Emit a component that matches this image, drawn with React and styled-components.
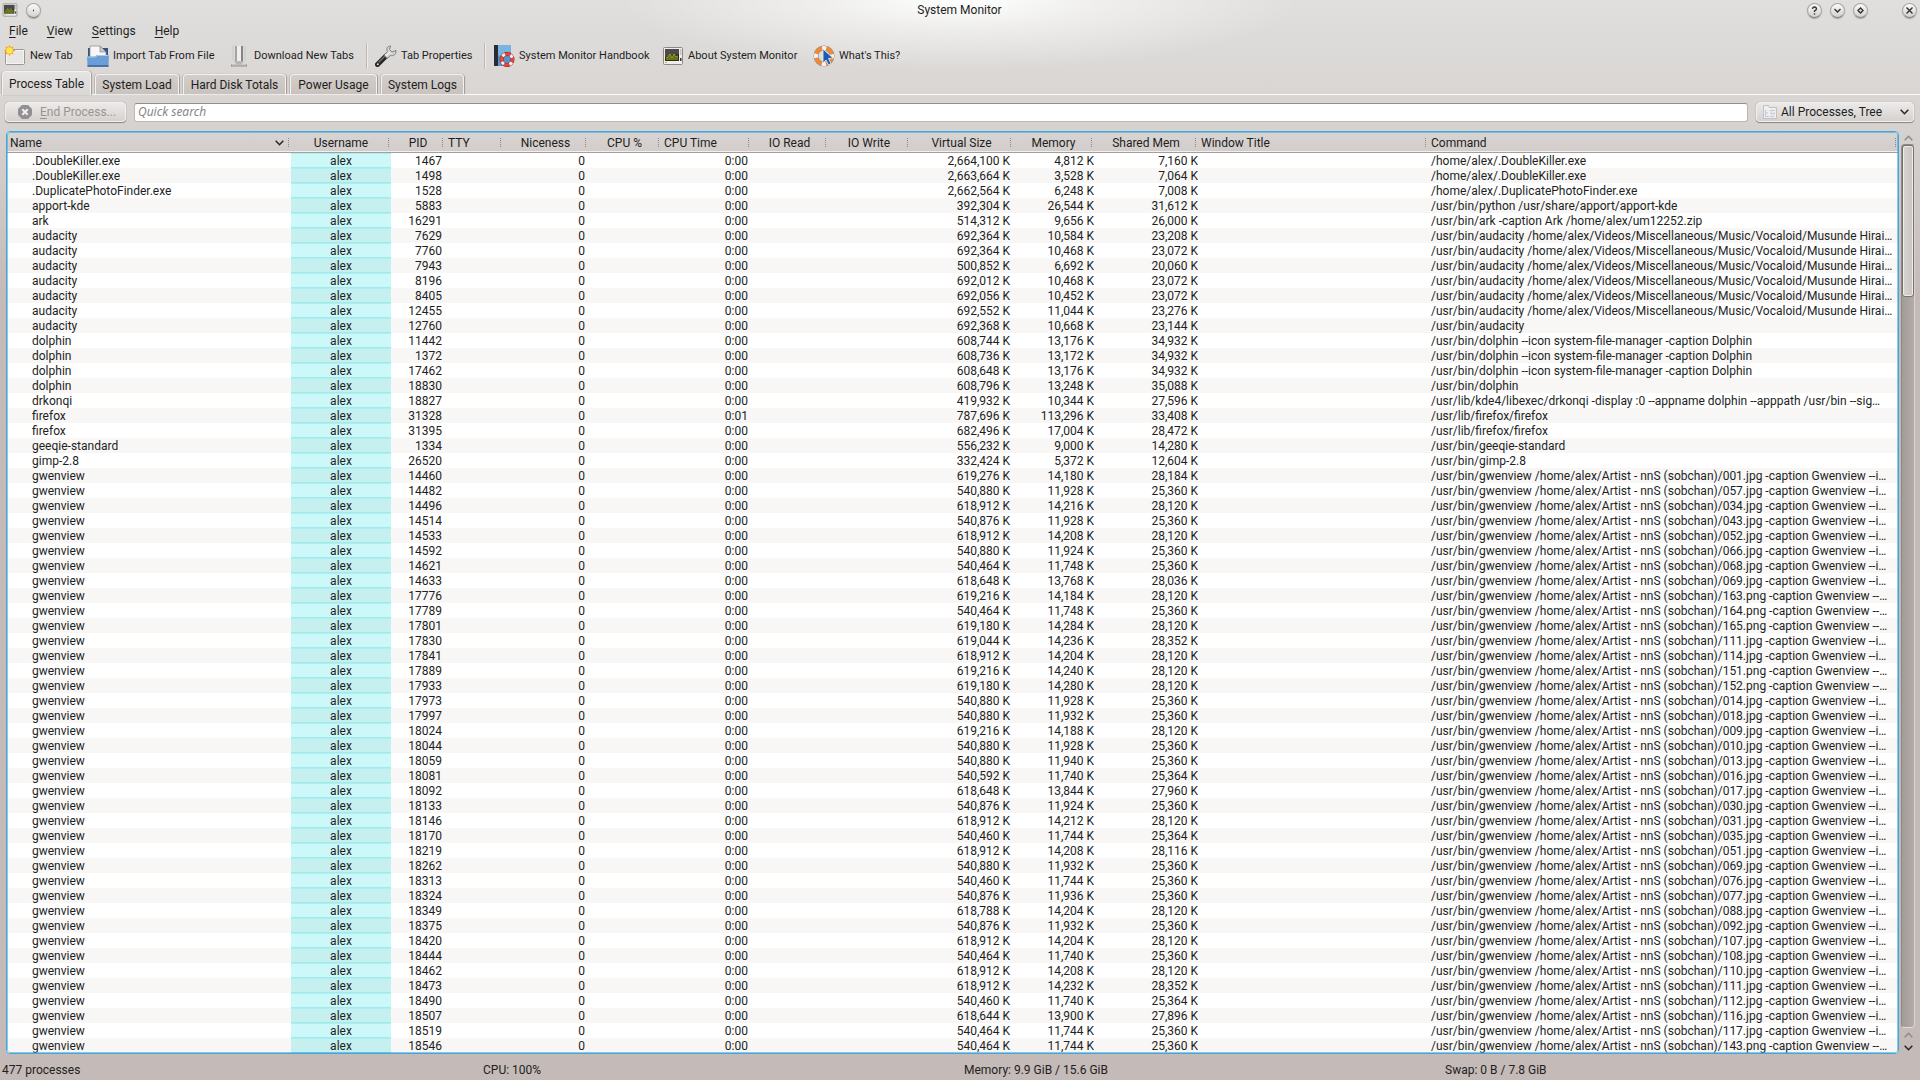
import styled, { createGlobalStyle, css } from 'styled-components';

const GlobalStyle = createGlobalStyle`
  * {
    box-sizing: border-box;
  }

  body {
    margin: 0;
    color: #221e1d;
    font: 12px/15px Roboto, 'Noto Sans', sans-serif;
  }

  button,
  input,
  select {
    color: inherit;
    font: inherit;
  }
`;

const Window = styled.div`
  display: flex;
  flex-direction: column;
  min-height: 100vh;
  background:
    radial-gradient(ellipse 340px 70px at 50% 0, #ffffff 0%, rgba(255, 255, 255, 0.5) 40%, rgba(255, 255, 255, 0) 100%) no-repeat,
    linear-gradient(#e0dfdd 0, #d6d2d0 130px, #c4bab7 300px);
`;

const TitleBar = styled.header`
  display: grid;
  grid-template-columns: 1fr auto 1fr;
  align-items: center;
  height: 20px;
  padding: 0 3px 0 2px;
`;

const TitleGroup = styled.div`
  display: flex;
  align-items: center;
  justify-content: ${({ $end }) => ($end ? 'flex-end' : 'flex-start')};
  gap: 8px;
`;

const Title = styled.h1`
  margin: 0;
  font-size: 12px;
  font-weight: 400;
`;

const WindowButton = styled.button`
  display: grid;
  place-items: center;
  width: 15px;
  height: 15px;
  margin-left: ${({ $apart }) => ($apart ? '26px' : '0')};
  padding: 0;
  border: 1px solid #aaa5a2;
  border-bottom-color: #85807d;
  border-radius: 50%;
  background: linear-gradient(#fbfbfa, #d4d0ce);
  box-shadow: 0 1px 1px rgba(0, 0, 0, 0.25);
`;

const MenuBar = styled.nav`
  display: flex;
  height: 21px;
`;

const MenuItem = styled.button`
  padding: 2px 10px 0 9px;
  border: 0;
  background: none;
`;

const Mnemonic = styled.span`
  text-decoration: underline;
  text-underline-offset: 2px;
`;

const Toolbar = styled.div`
  display: flex;
  align-items: center;
  height: 29px;
  padding-left: 4px;
`;

const ToolButton = styled.button`
  display: flex;
  align-items: center;
  gap: 4px;
  width: ${({ $width }) => $width}px;
  height: 26px;
  padding: 0;
  border: 0;
  background: none;
  font-size: 11px;
  white-space: nowrap;

  svg {
    flex: none;
  }
`;

const ToolSeparator = styled.span`
  width: 2px;
  height: 26px;
  margin-right: 7px;
  border-left: 1px solid #bdb7b4;
  border-right: 1px solid #efedec;
`;

const Tabs = styled.div`
  display: flex;
  align-items: flex-end;
  gap: 4px;
  height: 25px;
  padding-left: 2px;
  border-bottom: 1px solid #fbfafa;
`;

const Tab = styled.button`
  width: ${({ $width }) => $width}px;
  height: 20px;
  padding: 2px 0 0;
  border: 1px solid #f4f2f1;
  border-bottom: 0;
  border-radius: 4px 4px 0 0;
  background: linear-gradient(#d3cecb, #c9c2bf);
  box-shadow: 1px 0 1px #9f9895, -1px 0 1px #bbb5b2;
  white-space: nowrap;

  ${({ $active }) =>
    $active &&
    css`
      height: 24px;
      margin-bottom: -1px;
      background: linear-gradient(#e6e4e3, #dad6d4);
    `}
`;

const FilterBar = styled.div`
  display: flex;
  align-items: center;
  gap: 8px;
  height: 36px;
  padding: 0 6px 2px 5px;
`;

const raised = css`
  border: 1px solid #f3f1f0;
  border-radius: 4px;
  background: linear-gradient(#eceae9, #d5d1cf);
  box-shadow: 0 1px 1px #8b8582, 0 0 1px #8b8582;
`;

const EndButton = styled.button`
  ${raised}
  display: flex;
  align-items: center;
  gap: 7px;
  width: 121px;
  height: 20px;
  padding: 0 11px;
  color: #9a9491;
  white-space: nowrap;

  svg {
    flex: none;
  }
`;

const SearchBox = styled.input`
  flex: 1;
  height: 19px;
  padding: 0 3px;
  border: 1px solid #bdb7b4;
  border-top-color: #958f8c;
  border-radius: 3px;
  background: #ffffff;
  outline: none;

  &::placeholder {
    color: #8b8684;
    font-family: 'Noto Sans', sans-serif;
    font-style: italic;
    opacity: 1;
  }
`;

const FilterSelect = styled.label`
  ${raised}
  display: flex;
  align-items: center;
  gap: 3px;
  width: 158px;
  height: 20px;
  padding: 0 4px 0 5px;

  select {
    flex: 1;
    min-width: 0;
    padding: 0;
    border: 0;
    background: none;
    appearance: none;
    outline: none;
  }
`;

const TablePane = styled.main`
  display: flex;
  gap: 2px;
  padding: 0 5px 0 6px;
`;

const TableFrame = styled.div`
  position: relative;
  flex: 1;
  min-width: 0;
  overflow: hidden;
  border: 1px solid #43a7dc;
  border-radius: 4px;
  background: #ffffff;

  /* focus glow, drawn over the cells */
  &::after {
    position: absolute;
    inset: 0;
    border-radius: 3px;
    box-shadow: inset 0 0 0 1px rgba(67, 167, 220, 0.6);
    content: '';
    pointer-events: none;
  }
`;

const ProcessTable = styled.table`
  width: 100%;
  table-layout: fixed;
  border-spacing: 0;
`;

const HeadCell = styled.th`
  height: 21px;
  padding: 2px 3px 0;
  border-bottom: 1px solid #a59e9b;
  background:
    repeating-linear-gradient(#8f8986 0 1px, transparent 1px 2px) right 2px center / 1px 9px no-repeat,
    linear-gradient(#d9d5d3, #d2ccca);
  box-shadow: inset 0 -1px 0 #f2f0ef;
  font-weight: 400;
  text-align: ${({ $align }) => $align};
  white-space: nowrap;
`;

const SortHeading = styled.span`
  display: flex;
  align-items: center;
  justify-content: space-between;
  padding-right: 4px;
`;

const Row = styled.tr`
  background: ${({ $odd }) => ($odd ? '#f8f7f6' : '#ffffff')};
`;

const Cell = styled.td`
  height: 15px;
  padding: 2px ${({ $flush }) => ($flush ? 0 : 3)}px 0 3px;
  overflow: hidden;
  line-height: 13px;
  text-align: ${({ $align }) => $align || 'right'};
  white-space: nowrap;
`;

const NameCell = styled(Cell)`
  padding-left: 25px;
`;

const UserCell = styled(Cell)`
  background: ${({ $odd }) => ($odd ? '#c5f0ef' : '#cdf8fa')};
  box-shadow: inset 0 1px 0 #aaf0f0, inset 0 -1px 0 #a0ecec;
`;

const ScrollBar = styled.div`
  display: flex;
  flex-direction: column;
  align-items: center;
  width: 14px;
`;

const ScrollButton = styled.button`
  display: grid;
  place-items: center;
  width: 14px;
  height: 13px;
  padding: 0;
  border: 0;
  background: none;
`;

const ScrollGroove = styled.div`
  flex: 1;
  width: 14px;
  border: 1px solid #8f8885;
  border-right-color: #d8d2d0;
  border-bottom-color: #e2dedc;
  border-radius: 4px;
  background: linear-gradient(90deg, #a39b98, #b3aba8);
`;

const ScrollThumb = styled.div`
  width: 12px;
  height: 152px;
  border: 1px solid #77706d;
  border-radius: 3px;
  background: linear-gradient(90deg, #d8d4d2, #cac4c1);
  box-shadow: inset 0 0 0 1px #efedec;
`;

const StatusBar = styled.footer`
  display: grid;
  grid-template-columns: repeat(4, 1fr);
  gap: 6px;
  padding: 9px 0 2px 2px;
`;

const MonitorIcon = ({ size }) => (
  <svg width={size} height={size} viewBox="0 0 22 22">
    <rect x="1.5" y="2.5" width="19" height="17" rx="1" fill="#efeeed" stroke="#8d8987" />
    <rect x="3" y="4" width="14" height="12" fill="#2b2c28" />
    <path d="M3 4h14v5L3 12z" fill="#4b4c48" />
    <path d="M4 13l2-1 2-3 2 4 2-4 2 3 2-1v4H4z" fill="#6d7112" />
    <path d="M4 13l2-1 2-3 2 4 2-4 2 3 2-1" fill="none" stroke="#b0b331" strokeWidth=".7" />
    <path d="M18 5h1.500M18 7h1.500M18 9h1.500" stroke="#9c9997" />
    <rect x="18" y="13" width="1.500" height="3" fill="#333" />
    <rect x="3" y="17" width="2" height="1" fill="#b4c400" />
  </svg>
);

const NewTabIcon = () => (
  <svg width="22" height="22" viewBox="0 0 22 22">
    <rect x="1.500" y="4.500" width="19" height="15" rx="1" fill="#f5f4f3" stroke="#9c9896" />
    <rect x="3" y="6" width="16" height="12" fill="#e7e6e5" />
    <path d="M5.500 0l1.300 2.300 2.600-.9-.6 2.700 2.600 1.400-2.600 1.400.6 2.700-2.600-.9-1.300 2.300-1.300-2.300-2.600.9.600-2.700L-.2 5.500l2.400-1.400-.6-2.700 2.600.9z" fill="#f3a51c" />
    <circle cx="5.500" cy="5.500" r="3.200" fill="#ffe84d" />
  </svg>
);

const ImportIcon = () => (
  <svg width="22" height="22" viewBox="0 0 22 22">
    <path d="M1 3h5v8H1zM15 3h6v10H1V7z" fill="#2f5580" />
    <path d="M3 1h10l6 6v7H3z" fill="#f7f7f7" stroke="#8f9399" strokeWidth=".8" />
    <path d="M13 1v6h6z" fill="#c9ccd0" stroke="#777" strokeWidth=".6" />
    <path d="M0 11.500h8l2-1.500h12l-.5 11.500H.5z" fill="#6b9ed6" />
    <path d="M.5 12h8l2-1.500h11" fill="none" stroke="#a8cbee" />
    <path d="M.5 21h21" stroke="#355f94" strokeWidth="1.500" />
  </svg>
);

const DownloadIcon = () => (
  <svg width="22" height="22" viewBox="0 0 22 22">
    <path d="M7 1h2v15H7z" fill="#a4a3a2" />
    <path d="M9 1h4v15H9z" fill="#eeeeed" />
    <path d="M13 1h2v15h-2z" fill="#858482" />
    <path d="M5 1v14M17 1v14" stroke="#c6c4c2" strokeWidth=".8" />
    <path d="M6 16h10l-3 4H9z" fill="#b8b6b5" />
    <path d="M3 20.500h16" stroke="#8e8b89" strokeWidth="2" />
    <path d="M4 20h14" stroke="#e7e6e5" strokeWidth=".8" />
  </svg>
);

const WrenchIcon = () => (
  <svg width="22" height="22" viewBox="0 0 22 22">
    <path d="M2.500 19.500L11 11" stroke="#252525" strokeWidth="5" strokeLinecap="round" />
    <path d="M3.500 17.500L10 11" stroke="#777" strokeWidth="1.200" />
    <circle cx="2.800" cy="19.200" r="1" fill="#ddd" />
    <path d="M9 10l3.500-3.500C11 3.500 12.500 1 15.500 1l-1 3.500L17 7l4-1.500c.5 3.500-2.500 6-5.500 5L12 13.500z" fill="#d4d5d6" stroke="#747474" strokeWidth=".9" />
    <path d="M11 11l4-4" stroke="#fff" />
  </svg>
);

const HandbookIcon = () => (
  <svg width="22" height="22" viewBox="0 0 22 22">
    <rect x="1" y="0" width="17" height="21" fill="#5296cf" />
    <path d="M5 0h13v7L5 11z" fill="#79b3e0" />
    <rect x="1" y="0" width="4" height="21" fill="#262c35" />
    <circle cx="14" cy="14.500" r="5.500" fill="none" stroke="#8d2020" strokeWidth="4" />
    <circle cx="14" cy="14.500" r="5.500" fill="none" stroke="#e7483d" strokeWidth="3" />
    <circle cx="14" cy="14.500" r="5.500" fill="none" stroke="#f4f4f4" strokeWidth="3" strokeDasharray="2.800 5.840" strokeDashoffset="-3" />
  </svg>
);

const WhatsThisIcon = () => (
  <svg width="22" height="22" viewBox="0 0 22 22">
    <circle cx="11" cy="11" r="8" fill="none" stroke="#a08c7c" strokeWidth="5" />
    <circle cx="11" cy="11" r="8" fill="none" stroke="#ec8a3c" strokeWidth="4" />
    <circle cx="11" cy="11" r="8" fill="none" stroke="#f5f3f1" strokeWidth="4" strokeDasharray="4 8.570" strokeDashoffset="2" />
    <path d="M10 4l10 9-4.500.5 2.500 5-2.500 1.500-2.500-5L10 18z" fill="#1b5cb0" stroke="#d8e6f6" strokeWidth=".9" />
  </svg>
);

const StopIcon = () => (
  <svg width="16" height="16" viewBox="0 0 16 16">
    <path d="M5 1h6l4 4v6l-4 4H5l-4-4V5z" fill="#929090" />
    <path d="M5.300 5.300l5.400 5.400m0-5.400l-5.400 5.400" stroke="#f0efee" strokeWidth="2.200" />
  </svg>
);

const FolderIcon = () => (
  <svg width="16" height="16" viewBox="0 0 16 16" aria-hidden="true">
    <path d="M1.500 1.500h5l1 2h7v11h-13z" fill="#efeeee" stroke="#c3c0be" />
    <path d="M3.500 6v6.500H7M3.500 9H6M8 6.500h5M8 9.500h5M8 12.500h4" fill="none" stroke="#b9cadb" />
    <path d="M9.500 6v5M12 8v4" stroke="#cfd6df" />
  </svg>
);

const Chevron = ({ up, color = '#2c2827' }) => (
  <svg width="9" height="6" viewBox="0 0 9 6" aria-hidden="true">
    <path d={up ? 'M.7 5.200L4.500 1.300 8.300 5.200' : 'M.7.800L4.500 4.700 8.300.800'} fill="none" stroke={color} strokeWidth="1.600" />
  </svg>
);

const Glyph = ({ d }) => (
  <svg width="9" height="9" viewBox="0 0 9 9">
    <path d={d} fill="none" stroke="#33302e" strokeWidth="1.400" />
  </svg>
);

const WINDOW_BUTTONS = [
  { label: 'Context help', d: 'M2.500 2.800Q2.800 1 4.500 1T6.500 2.700Q6.500 3.800 4.500 5V6M4.500 7.200V8.500' },
  { label: 'Minimize', d: 'M1.500 3L4.500 6 7.500 3' },
  { label: 'Maximize', d: 'M4.500 2L7 4.500 4.500 7 2 4.500z' },
  { label: 'Close', d: 'M1.500 1.500l6 6m0-6l-6 6', apart: true },
];

const TABS = [
  { label: 'Process Table', width: 89, active: true },
  { label: 'System Load', width: 84 },
  { label: 'Hard Disk Totals', width: 103 },
  { label: 'Power Usage', width: 87 },
  { label: 'System Logs', width: 83 },
];

const COLUMNS = [
  { label: 'Name', width: 284, align: 'left', sorted: true },
  { label: 'Username', width: 100, align: 'center' },
  { label: 'PID', width: 54, align: 'center' },
  { label: 'TTY', width: 58, align: 'left' },
  { label: 'Niceness', width: 85, align: 'center' },
  { label: 'CPU %', width: 73, align: 'center' },
  { label: 'CPU Time', width: 90, align: 'left' },
  { label: 'IO Read', width: 77, align: 'center' },
  { label: 'IO Write', width: 82, align: 'center' },
  { label: 'Virtual Size', width: 103, align: 'center' },
  { label: 'Memory', width: 81, align: 'center' },
  { label: 'Shared Mem', width: 104, align: 'center' },
  { label: 'Window Title', width: 230, align: 'left' },
  { label: 'Command', align: 'left' },
];

const AUDACITY = '/usr/bin/audacity /home/alex/Videos/Miscellaneous/Music/Vocaloid/Musunde Hirai…';
const DOLPHIN = '/usr/bin/dolphin --icon system-file-manager -caption Dolphin';

const APPS = [
  ['.DoubleKiller.exe', 1467, '2,664,100', '4,812', '7,160', '/home/alex/.DoubleKiller.exe'],
  ['.DoubleKiller.exe', 1498, '2,663,664', '3,528', '7,064', '/home/alex/.DoubleKiller.exe'],
  ['.DuplicatePhotoFinder.exe', 1528, '2,662,564', '6,248', '7,008', '/home/alex/.DuplicatePhotoFinder.exe'],
  ['apport-kde', 5883, '392,304', '26,544', '31,612', '/usr/bin/python /usr/share/apport/apport-kde'],
  ['ark', 16291, '514,312', '9,656', '26,000', '/usr/bin/ark -caption Ark /home/alex/um12252.zip'],
  ['audacity', 7629, '692,364', '10,584', '23,208', AUDACITY],
  ['audacity', 7760, '692,364', '10,468', '23,072', AUDACITY],
  ['audacity', 7943, '500,852', '6,692', '20,060', AUDACITY],
  ['audacity', 8196, '692,012', '10,468', '23,072', AUDACITY],
  ['audacity', 8405, '692,056', '10,452', '23,072', AUDACITY],
  ['audacity', 12455, '692,552', '11,044', '23,276', AUDACITY],
  ['audacity', 12760, '692,368', '10,668', '23,144', '/usr/bin/audacity'],
  ['dolphin', 11442, '608,744', '13,176', '34,932', DOLPHIN],
  ['dolphin', 1372, '608,736', '13,172', '34,932', DOLPHIN],
  ['dolphin', 17462, '608,648', '13,176', '34,932', DOLPHIN],
  ['dolphin', 18830, '608,796', '13,248', '35,088', '/usr/bin/dolphin'],
  ['drkonqi', 18827, '419,932', '10,344', '27,596', '/usr/lib/kde4/libexec/drkonqi -display :0 --appname dolphin --apppath /usr/bin --sig…'],
  ['firefox', 31328, '787,696', '113,296', '33,408', '/usr/lib/firefox/firefox', '0:01'],
  ['firefox', 31395, '682,496', '17,004', '28,472', '/usr/lib/firefox/firefox'],
  ['geeqie-standard', 1334, '556,232', '9,000', '14,280', '/usr/bin/geeqie-standard'],
  ['gimp-2.8', 26520, '332,424', '5,372', '12,604', '/usr/bin/gimp-2.8'],
];

// pid, virtual size, memory, shared memory, opened file
const GWENVIEW = [
  [14460, '619,276', '14,180', '28,184', '001.jpg'],
  [14482, '540,880', '11,928', '25,360', '057.jpg'],
  [14496, '618,912', '14,216', '28,120', '034.jpg'],
  [14514, '540,876', '11,928', '25,360', '043.jpg'],
  [14533, '618,912', '14,208', '28,120', '052.jpg'],
  [14592, '540,880', '11,924', '25,360', '066.jpg'],
  [14621, '540,464', '11,748', '25,360', '068.jpg'],
  [14633, '618,648', '13,768', '28,036', '069.jpg'],
  [17776, '619,216', '14,184', '28,120', '163.png'],
  [17789, '540,464', '11,748', '25,360', '164.png'],
  [17801, '619,180', '14,284', '28,120', '165.png'],
  [17830, '619,044', '14,236', '28,352', '111.jpg'],
  [17841, '618,912', '14,204', '28,120', '114.jpg'],
  [17889, '619,216', '14,240', '28,120', '151.png'],
  [17933, '619,180', '14,280', '28,120', '152.png'],
  [17973, '540,880', '11,928', '25,360', '014.jpg'],
  [17997, '540,880', '11,932', '25,360', '018.jpg'],
  [18024, '619,216', '14,188', '28,120', '009.jpg'],
  [18044, '540,880', '11,928', '25,360', '010.jpg'],
  [18059, '540,880', '11,940', '25,360', '013.jpg'],
  [18081, '540,592', '11,740', '25,364', '016.jpg'],
  [18092, '618,648', '13,844', '27,960', '017.jpg'],
  [18133, '540,876', '11,924', '25,360', '030.jpg'],
  [18146, '618,912', '14,212', '28,120', '031.jpg'],
  [18170, '540,460', '11,744', '25,364', '035.jpg'],
  [18219, '618,912', '14,208', '28,116', '051.jpg'],
  [18262, '540,880', '11,932', '25,360', '069.jpg'],
  [18313, '540,460', '11,744', '25,360', '076.jpg'],
  [18324, '540,876', '11,936', '25,360', '077.jpg'],
  [18349, '618,788', '14,204', '28,120', '088.jpg'],
  [18375, '540,876', '11,932', '25,360', '092.jpg'],
  [18420, '618,912', '14,204', '28,120', '107.jpg'],
  [18444, '540,464', '11,740', '25,360', '108.jpg'],
  [18462, '618,912', '14,208', '28,120', '110.jpg'],
  [18473, '618,912', '14,232', '28,352', '111.jpg'],
  [18490, '540,460', '11,740', '25,364', '112.jpg'],
  [18507, '618,644', '13,900', '27,896', '116.jpg'],
  [18519, '540,464', '11,744', '25,360', '117.jpg'],
  [18546, '540,464', '11,744', '25,360', '143.png'],
];

const gwenviewRow = ([pid, virt, mem, shared, file]) => [
  'gwenview',
  pid,
  virt,
  mem,
  shared,
  `/usr/bin/gwenview /home/alex/Artist - nnS (sobchan)/${file} -caption Gwenview --${file.endsWith('png') ? '' : 'i'}…`,
];

const PROCESSES = [...APPS, ...GWENVIEW.map(gwenviewRow)];

const ProcessRow = ({ process, odd }) => {
  const [name, pid, virt, mem, shared, command, time = '0:00'] = process;

  return (
    <Row $odd={odd}>
      <NameCell $align="left">{name}</NameCell>
      <UserCell $align="center" $odd={odd}>alex</UserCell>
      <Cell>{pid}</Cell>
      <Cell />
      <Cell>0</Cell>
      <Cell />
      <Cell>{time}</Cell>
      <Cell />
      <Cell />
      <Cell>{virt} K</Cell>
      <Cell $flush>{mem} K</Cell>
      <Cell $flush>{shared} K</Cell>
      <Cell />
      <Cell $align="left" $flush>{command}</Cell>
    </Row>
  );
};

const App = () => (
  <Window>
    <GlobalStyle />
    <TitleBar>
      <TitleGroup>
        <MonitorIcon size={16} />
        <WindowButton aria-label="On all desktops">
          <Glyph d="M4 4.500h1" />
        </WindowButton>
      </TitleGroup>
      <Title>System Monitor</Title>
      <TitleGroup $end>
        {WINDOW_BUTTONS.map(({ label, d, apart }) => (
          <WindowButton key={label} aria-label={label} $apart={apart}>
            <Glyph d={d} />
          </WindowButton>
        ))}
      </TitleGroup>
    </TitleBar>

    <MenuBar>
      {['File', 'View', 'Settings', 'Help'].map((item) => (
        <MenuItem key={item}>
          <Mnemonic>{item[0]}</Mnemonic>
          {item.slice(1)}
        </MenuItem>
      ))}
    </MenuBar>

    <Toolbar>
      <ToolButton $width={83}><NewTabIcon />New Tab</ToolButton>
      <ToolButton $width={141}><ImportIcon />Import Tab From File</ToolButton>
      <ToolButton $width={138}><DownloadIcon />Download New Tabs</ToolButton>
      <ToolSeparator />
      <ToolButton $width={109}><WrenchIcon />Tab Properties</ToolButton>
      <ToolSeparator />
      <ToolButton $width={169}><HandbookIcon />System Monitor Handbook</ToolButton>
      <ToolButton $width={151}><MonitorIcon size={22} />About System Monitor</ToolButton>
      <ToolButton $width={90}><WhatsThisIcon />What's This?</ToolButton>
    </Toolbar>

    <Tabs role="tablist">
      {TABS.map(({ label, width, active }) => (
        <Tab key={label} role="tab" aria-selected={!!active} $width={width} $active={active}>
          {label}
        </Tab>
      ))}
    </Tabs>

    <FilterBar>
      <EndButton disabled>
        <StopIcon />
        <span><Mnemonic>E</Mnemonic>nd Process...</span>
      </EndButton>
      <SearchBox type="text" placeholder="Quick search" aria-label="Quick search" />
      <FilterSelect>
        <FolderIcon />
        <select aria-label="Process filter" defaultValue="tree">
          <option value="tree">All Processes, Tree</option>
        </select>
        <Chevron />
      </FilterSelect>
    </FilterBar>

    <TablePane>
      <TableFrame>
        <ProcessTable>
          <colgroup>
            {COLUMNS.map(({ label, width }) => (
              <col key={label} width={width} />
            ))}
          </colgroup>
          <thead>
            <tr>
              {COLUMNS.map(({ label, align, sorted }) => (
                <HeadCell key={label} $align={align}>
                  {sorted ? <SortHeading>{label}<Chevron /></SortHeading> : label}
                </HeadCell>
              ))}
            </tr>
          </thead>
          <tbody>
            {PROCESSES.map((process, i) => (
              <ProcessRow key={process[1]} process={process} odd={i % 2 === 1} />
            ))}
          </tbody>
        </ProcessTable>
      </TableFrame>
      <ScrollBar>
        <ScrollButton aria-label="Scroll up"><Chevron up color="#928b88" /></ScrollButton>
        <ScrollGroove>
          <ScrollThumb />
        </ScrollGroove>
        <ScrollButton aria-label="Page up"><Chevron up color="#928b88" /></ScrollButton>
        <ScrollButton aria-label="Scroll down"><Chevron /></ScrollButton>
      </ScrollBar>
    </TablePane>

    <StatusBar>
      <span>477 processes</span>
      <span>CPU: 100%</span>
      <span>Memory: 9.9 GiB / 15.6 GiB</span>
      <span>Swap: 0 B / 7.8 GiB</span>
    </StatusBar>
  </Window>
);

export default App;
